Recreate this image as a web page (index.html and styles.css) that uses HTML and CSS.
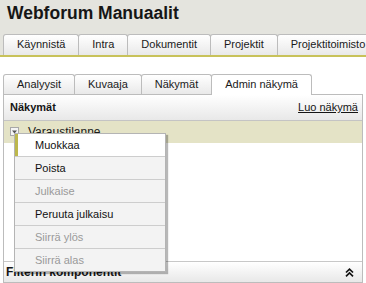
FILE: index.html
```html
<!DOCTYPE html>
<html lang="fi">
<head>
<meta charset="utf-8">
<title>Webforum Manuaalit</title>
<link rel="stylesheet" href="styles.css">
</head>
<body>
<div class="top">
  <h1 class="title">Webforum Manuaalit</h1>
  <ul class="tabs main-tabs">
    <li class="tab">Käynnistä</li>
    <li class="tab">Intra</li>
    <li class="tab">Dokumentit</li>
    <li class="tab">Projektit</li>
    <li class="tab">Projektitoimisto</li>
  </ul>
</div>
<ul class="tabs sub-tabs">
  <li class="tab">Analyysit</li>
  <li class="tab">Kuvaaja</li>
  <li class="tab">Näkymät</li>
  <li class="tab active">Admin näkymä</li>
</ul>
<div class="panel">
  <div class="panel-head">
    <span class="head-title">Näkymät</span>
    <a class="create-link">Luo näkymä</a>
  </div>
  <div class="row">
    <span class="toggle">
      <svg width="9" height="9" viewBox="0 0 9 9"><path d="M2 3.5 L7 3.5 L4.5 6.5 Z" fill="#555"/></svg>
    </span>
    <span class="row-label">Varaustilanne</span>
    <ul class="menu">
      <li class="menu-item current">Muokkaa</li>
      <li class="menu-item">Poista</li>
      <li class="menu-item disabled">Julkaise</li>
      <li class="menu-item">Peruuta julkaisu</li>
      <li class="menu-item disabled">Siirrä ylös</li>
      <li class="menu-item disabled">Siirrä alas</li>
    </ul>
  </div>
  <div class="panel-body"></div>
  <div class="panel-foot">
    <span class="foot-title">Filterin komponentit</span>
    <svg class="collapse" width="9" height="9" viewBox="0 0 9 9"><path d="M1 4.5 L4.5 1.2 L8 4.5 M1 8.3 L4.5 5 L8 8.3" fill="none" stroke="#111" stroke-width="1.7"/></svg>
  </div>
</div>
</body>
</html>
```

FILE: styles.css
```css
html, body {
  margin: 0;
  padding: 0;
  background: #fff;
  font-family: "Liberation Sans", Arial, sans-serif;
  color: #1a1a1a;
  overflow: hidden;
}

.top {
  background: #e4e4de;
  border-bottom: 2px solid #c8c25a;
}

.title {
  margin: 0;
  height: 31px;
  padding: 3px 0 0 7px;
  font-size: 17.5px;
  line-height: 20px;
  font-weight: bold;
  color: #161616;
}

.tabs {
  list-style: none;
  margin: 0;
  padding: 0 0 0 3px;
  display: flex;
  white-space: nowrap;
}

.tab {
  flex: none;
  height: 19px;
  line-height: 19px;
  padding: 0 13px;
  font-size: 11px;
  color: #1a1a1a;
  border: 1px solid #bcbcbc;
  border-bottom: none;
  border-radius: 3px 3px 0 0;
  background: linear-gradient(#ffffff, #e9e9e9);
}

.tab + .tab {
  margin-left: -1px;
}

.main-tabs .tab {
  height: 20px;
}

.sub-tabs {
  margin-top: 17px;
}

.sub-tabs .tab.active {
  position: relative;
  z-index: 1;
  background: #fff;
  height: 20px;
  margin-bottom: -1px;
}

.panel {
  margin: 0 3px;
  border: 1px solid #bcbcbc;
}

.panel-head {
  height: 25px;
  border-bottom: 1px solid #c4c4c4;
  background: linear-gradient(#ffffff, #e8e8e8);
  display: flex;
  align-items: center;
  justify-content: space-between;
  padding: 0 4px 0 6px;
  font-size: 11px;
  line-height: 25px;
}

.head-title {
  font-weight: bold;
  color: #151515;
}

.create-link {
  color: #151515;
  text-decoration: underline;
}

.row {
  position: relative;
  height: 22px;
  background: #e4e3c6;
  display: flex;
  align-items: center;
  font-size: 12px;
  line-height: 22px;
}

.toggle {
  width: 7px;
  height: 7px;
  margin: 0 0 0 6px;
  align-self: flex-start;
  margin-top: 6px;
  border: 1px solid #a8a8a8;
  background: #f4f4f4;
  display: flex;
  align-items: center;
  justify-content: center;
  overflow: hidden;
}

.toggle svg {
  flex: none;
}

.row-label {
  margin-left: 9px;
  color: #1a1a1a;
}

.menu {
  position: absolute;
  left: 10px;
  top: 12px;
  z-index: 5;
  width: 150px;
  margin: 0;
  padding: 0;
  list-style: none;
  border: 1px solid #b4b4b4;
  background: #f3f3f3;
  box-shadow: 2px 2px 1px rgba(0, 0, 0, 0.28);
}

.menu-item {
  height: 22px;
  line-height: 22px;
  padding-left: 20px;
  font-size: 11px;
  color: #111;
  background: #f3f3f3;
  border-top: 1px solid #cdcdcd;
}

.menu-item:first-child {
  border-top: none;
}

.menu-item.current {
  background: #fff;
  box-shadow: inset 3px 0 0 #bdb84c;
}

.menu-item.disabled {
  color: #9a9a9a;
}

.panel-body {
  height: 118px;
  background: #fff;
}

.panel-foot {
  height: 20px;
  border-top: 1px solid #c8c8c8;
  background: linear-gradient(#ffffff, #e8e8e8);
  display: flex;
  align-items: center;
  justify-content: space-between;
  padding: 0 8px 0 2px;
  font-size: 12px;
  line-height: 20px;
}

.foot-title {
  font-weight: bold;
  color: #151515;
}

.collapse {
  flex: none;
}
```
